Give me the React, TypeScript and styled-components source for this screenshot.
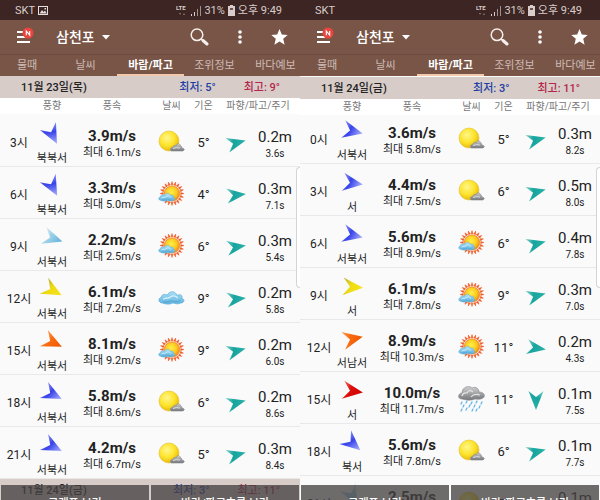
import React from 'react';
import styled, { createGlobalStyle } from 'styled-components';

const GlobalStyle = createGlobalStyle`
  * { box-sizing: border-box; }
  html, body, #root { height: 100%; }
  body {
    margin: 0;
    overflow: hidden;
    background: #fafafa;
    color: #222;
    font-family: Roboto, "Noto Sans CJK KR", sans-serif;
    font-size: 12px;
  }
  button { font: inherit; border: 0; padding: 0; background: none; color: inherit; cursor: pointer; }
`;

type Sky = 'cloudy' | 'sunny' | 'cloud' | 'rain';
type Tone = 'blue' | 'pale' | 'yellow' | 'orange' | 'red' | 'teal';

interface Hour {
  time: string;
  tone: Tone;
  turn: number;
  from: string;
  speed: string;
  gust: string;
  sky: Sky;
  temp: number;
  waveTurn: number;
  wave: string;
  period: string;
}

interface Day {
  date: string;
  low: number;
  high: number;
}

const hour = (
  time: string, tone: Tone, turn: number, from: string, speed: string, gust: string,
  sky: Sky, temp: number, waveTurn: number, wave: string, period: string,
): Hour => ({ time, tone, turn, from, speed, gust, sky, temp, waveTurn, wave, period });

const thursday: Hour[] = [
  hour('3시', 'blue', 63, '북북서', '3.9', '6.1', 'cloudy', 5, -15, '0.2', '3.6'),
  hour('6시', 'blue', 62, '북북서', '3.3', '5.0', 'sunny', 4, -6, '0.3', '7.1'),
  hour('9시', 'pale', 18, '서북서', '2.2', '2.5', 'sunny', 6, -8, '0.3', '5.4'),
  hour('12시', 'yellow', 28, '서북서', '6.1', '7.2', 'cloud', 9, -6, '0.2', '5.8'),
  hour('15시', 'orange', 26, '서북서', '8.1', '9.2', 'sunny', 9, -15, '0.2', '6.0'),
  hour('18시', 'blue', 27, '서북서', '5.8', '8.6', 'cloudy', 6, -14, '0.2', '8.6'),
  hour('21시', 'blue', 27, '서북서', '4.2', '6.7', 'cloudy', 5, -14, '0.3', '8.4'),
];

const friday: Hour[] = [
  hour('0시', 'blue', 13, '서북서', '3.6', '5.8', 'cloudy', 5, -14, '0.3', '8.2'),
  hour('3시', 'blue', 8, '서', '4.4', '7.5', 'cloudy', 6, -14, '0.5', '8.0'),
  hour('6시', 'blue', 13, '서북서', '5.6', '8.9', 'sunny', 6, -14, '0.4', '7.8'),
  hour('9시', 'yellow', 4, '서', '6.1', '7.8', 'sunny', 9, -15, '0.3', '7.0'),
  hour('12시', 'orange', -12, '서남서', '8.9', '10.3', 'sunny', 11, 9, '0.2', '4.3'),
  hour('15시', 'red', 8, '서', '10.0', '11.7', 'rain', 11, 90, '0.1', '7.5'),
  hour('18시', 'blue', 41, '북서', '5.6', '7.8', 'cloudy', 6, -14, '0.1', '7.7'),
  hour('21시', 'pale', 62, '북북서', '2.5', '3.4', 'cloudy', 5, -14, '0.1', '7.6'),
];

const tones: Record<Tone, [string, string, string]> = {
  blue: ['#8f96f4', '#3843ea', '#a3aafc'],
  pale: ['#e6eef2', '#9bd0e8', '#62b4dc'],
  yellow: ['#b8ac3a', '#eedb12', '#f6e21c'],
  orange: ['#f8a35c', '#fa6a10', '#ee5a06'],
  red: ['#f07060', '#dd0d0a', '#ce0505'],
  teal: ['#7fd0cb', '#17a49e', '#2ab0a8'],
};

const Screens = styled.main`
  display: grid;
  grid-template-columns: 1fr 1fr;
  height: 100vh;
  overflow: hidden;
`;

const Phone = styled.section`
  position: relative;
  display: flex;
  flex-direction: column;
  min-width: 0;
  height: 100vh;
  overflow: hidden;
  background: #fafafa;
`;

const StatusBar = styled.div`
  display: flex;
  align-items: center;
  justify-content: space-between;
  flex: none;
  height: 20px;
  padding: 1px 18px 0 15px;
  background: #3c2523;
  color: #d8cdca;
  font-size: 11px;
  line-height: 18px;
`;

const StatusGroup = styled.div`
  display: flex;
  align-items: center;
  gap: 3px;
  white-space: nowrap;
`;

const AppBar = styled.header`
  display: flex;
  align-items: center;
  flex: none;
  height: 35px;
  padding: 0 12px 0 17px;
  background: #795548;
  border-bottom: 1px solid #6d4a3f;
  color: #fff;
`;

const IconButton = styled.button`
  display: flex;
  flex: none;
  align-items: center;
  justify-content: center;
  height: 24px;
`;

const PlaceButton = styled.button`
  display: flex;
  align-items: center;
  gap: 7px;
  margin-left: 21px;
  font-size: 14px;
  line-height: 20px;
  font-weight: 500;
`;

const Actions = styled.div`
  display: flex;
  align-items: center;
  gap: 28px;
  margin-left: auto;
`;

const Tabs = styled.nav`
  display: grid;
  grid-template-columns: 54fr 63fr 67fr 61fr 61fr;
  flex: none;
  height: 21px;
  margin-right: -6px;
  background: #795548;
  overflow: hidden;
`;

const Tab = styled.a<{ $active?: boolean }>`
  display: flex;
  align-items: center;
  justify-content: center;
  padding-top: 3px;
  border-bottom: 2px solid ${p => (p.$active ? '#f3c9ac' : 'transparent')};
  color: ${p => (p.$active ? '#fff' : '#cdbcb4')};
  font-size: 11px;
  line-height: 16px;
  font-weight: ${p => (p.$active ? 700 : 400)};
  text-decoration: none;
  white-space: nowrap;
`;

const DateBar = styled.div<{ $top?: number }>`
  display: flex;
  align-items: center;
  flex: none;
  height: 22px;
  margin-top: ${p => p.$top ?? 0}px;
  padding: 2px 20px 0 21px;
  background: #d7ccc8;
  font-size: 11px;
  line-height: 20px;
  font-weight: 500;
`;

const Extreme = styled.span<{ $kind: 'low' | 'high' }>`
  margin-left: ${p => (p.$kind === 'low' ? 'auto' : '28px')};
  color: ${p => (p.$kind === 'low' ? '#1d3fa5' : '#b3264a')};
`;

const Table = styled.table`
  display: flex;
  flex: none;
  flex-direction: column;
`;

const Head = styled.thead`
  position: relative;
  display: block;
  flex: none;
  background: #fff;
`;

const HeadRow = styled.tr`
  display: grid;
  grid-template-columns: 38px 28px 92px 27px 37px 1fr;
  height: 16px;
`;

const HeadCell = styled.th`
  display: flex;
  align-items: center;
  justify-content: center;
  padding: 0;
  color: #777;
  font-size: 10px;
  line-height: 14px;
  font-weight: 400;
  white-space: nowrap;

  &:last-child { padding-right: 6px; }
`;

const Body = styled.tbody<{ $scrolled?: boolean }>`
  display: flex;
  flex-direction: column;
  margin-top: ${p => (p.$scrolled ? '-3px' : '1px')};
`;

const Row = styled.tr`
  display: grid;
  grid-template-columns: 38px 28px 92px 27px 37px 28px 50px;
  flex: none;
  height: 52px;
  border-bottom: 1px solid #e9e9e9;
`;

const Cell = styled.td<{ $size?: number; $drop?: number }>`
  display: flex;
  flex-direction: column;
  align-items: center;
  justify-content: center;
  padding: ${p => p.$drop ?? 3}px 0 0;
  font-size: ${p => p.$size ?? 12}px;
  line-height: 16px;
  white-space: nowrap;
`;

const WindCell = styled(Cell)`
  justify-content: flex-start;
  gap: 5px;
  padding: 7px 0 0;
`;

const Large = styled.span<{ $strong?: boolean }>`
  font-size: 15px;
  line-height: 18px;
  font-weight: ${p => (p.$strong ? 700 : 400)};
`;

const Small = styled.span`
  font-size: 11px;
  line-height: 16px;
`;

const Tiny = styled.span`
  font-size: 10px;
  line-height: 16px;
`;

const EdgeHandle = styled.div`
  position: absolute;
  top: 167px;
  right: 0;
  width: 4px;
  height: 121px;
  border: 1px solid #d4d4d4;
  border-right: 0;
  border-radius: 4px 0 0 4px;
  background: #fff;
`;

const BottomBar = styled.div`
  position: absolute;
  left: 0;
  right: 0;
  bottom: 0;
  display: grid;
  grid-template-columns: 1fr 1fr;
  gap: 2px;
  height: 15px;
  padding: 0 1px;
  overflow: hidden;
`;

const BottomButton = styled.button`
  display: flex;
  align-items: flex-start;
  justify-content: center;
  padding-top: 11px;
  background: rgba(70, 66, 66, 0.78);
  color: #fff;
  font-size: 11px;
  line-height: 16px;
  font-weight: 500;
  white-space: nowrap;
`;

const Drawing = styled.svg`
  display: block;
  flex: none;
  overflow: visible;
`;

function Arrow({ tone, turn, wave }: { tone: Tone; turn: number; wave?: boolean }) {
  const id = `arrow-${tone}`;
  const [tail, mid, tip] = tones[tone];
  const shape = wave ? 'M-9-7.5 10 0-9 7.5-3 0Z' : 'M-9-9 11 0-9 9-2 0Z';
  return (
    <Drawing width="24" height="24" viewBox="-12 -12 24 24" aria-hidden="true">
      <defs>
        <linearGradient id={id} x1="0" x2="1" y1="0" y2="0.3">
          <stop offset="0" stopColor={tail} />
          <stop offset="0.45" stopColor={mid} />
          <stop offset="1" stopColor={tip} />
        </linearGradient>
      </defs>
      <g transform={`rotate(${turn})`}>
        <path d={shape} fill={`url(#${id})`} />
      </g>
    </Drawing>
  );
}

function PuffCloud({ x, y, scale }: { x: number; y: number; scale: number }) {
  return (
    <g transform={`translate(${x} ${y}) scale(${scale})`}>
      <path
        d="M4 12C0 12-1 7 3 6 3 3 7 2 9 4 11-1 18-1 19 4 23 2 26 5 24 7 28 8 27 12 23 12 20 14 17 12 15 12 11 14 7 13 4 12Z"
        fill="url(#puff)" stroke="#5cabd4" strokeWidth="0.7"
      />
      <path d="M5 8C8 6 10 8 12 6S18 4 20 7" fill="none" stroke="#d9f2fc" strokeWidth="1.3" />
      <path d="M5 11C9 12 11 9 15 10S20 11 23 9" fill="none" stroke="#4a9ecb" strokeWidth="0.8" />
    </g>
  );
}

const rays = Array.from({ length: 20 }, (_, i) => i * 18);

function SkyIcon({ sky }: { sky: Sky }) {
  return (
    <Drawing width="27" height="27" viewBox="0 0 27 27" role="img" aria-label={sky}>
      <defs>
        <radialGradient id="sun" cx="0.4" cy="0.35" r="0.65">
          <stop offset="0" stopColor="#fff68a" />
          <stop offset="0.6" stopColor="#fde32a" />
          <stop offset="1" stopColor="#e9b90c" />
        </radialGradient>
        <radialGradient id="hotsun" cx="0.45" cy="0.4" r="0.6">
          <stop offset="0" stopColor="#fff04a" />
          <stop offset="0.6" stopColor="#fdc91d" />
          <stop offset="1" stopColor="#f18a14" />
        </radialGradient>
        <linearGradient id="puff" x1="0" x2="0" y1="0" y2="1">
          <stop offset="0" stopColor="#aadff5" />
          <stop offset="1" stopColor="#5fb2df" />
        </linearGradient>
        <linearGradient id="gray" x1="0" x2="0" y1="0" y2="1">
          <stop offset="0" stopColor="#d0d0d0" />
          <stop offset="1" stopColor="#74777b" />
        </linearGradient>
      </defs>
      {sky === 'cloudy' && (
        <>
          <circle cx="11" cy="12" r="10" fill="url(#sun)" stroke="#e3bf2e" strokeWidth="0.6" />
          <path d="M13 22Q11 19 15 18 16 15 18 17 20 12 23 17 24 18 24 19 28 20 25 22Z" fill="url(#gray)" stroke="#85888c" strokeWidth="0.6" />
          <path d="M15 19.500Q18 18 22 19" stroke="#eee" strokeWidth="0.8" fill="none" />
        </>
      )}
      {sky === 'sunny' && (
        <>
          {rays.map(a => (
            <path key={a} d="M13 3.800 14 .5 15 3.800Z" transform={`rotate(${a} 14 12.500)`} fill="#ee5a24" stroke="#ee5a24" strokeWidth="0.5" />
          ))}
          <circle cx="14" cy="12.500" r="7.600" fill="url(#hotsun)" stroke="#f07f1e" strokeWidth="0.8" />
          <PuffCloud x={0.5} y={12} scale={0.62} />
        </>
      )}
      {sky === 'cloud' && <PuffCloud x={0.5} y={6.500} scale={0.96} />}
      {sky === 'rain' && (
        <>
          <path d="M4 13C-1 13 0 7 4 7 4 1 11-1 14 2 18 0 21 3 21 6 26 6 28 10 25 12 22 14 19 13 17 13 12 15 8 14 4 13Z" fill="url(#gray)" stroke="#85858a" strokeWidth="0.6" />
          <path d="M4 10Q5 6 9 7 11 3 15 6M13 11Q16 7 22 9" stroke="#e4e4e4" strokeWidth="1.200" fill="none" />
          <path d="M4 16 3 18M9 15 8 17M14 16 13 18M19 15 18 17M24 16 23 18M6 19 5 21M12 19 11 21M17 19 16 21M22 20 21 22M4 23 3 25M9 22 8 24M15 23 14 25M19 23 18 25" stroke="#63b7e8" strokeWidth="1.300" strokeLinecap="round" />
        </>
      )}
    </Drawing>
  );
}

function StatusIcons() {
  return (
    <StatusGroup>
      <svg width="12" height="12" viewBox="0 0 12 12" aria-label="LTE">
        <text x="0" y="5" fontSize="6" fontWeight="700" fill="#d8cdca">LTE</text>
        <path d="M3 8h2l-1 2zM7 10h2l-1-2z" fill="#8d7b78" />
      </svg>
      <svg width="10" height="10" viewBox="0 0 10 10" aria-hidden="true">
        <path d="M0 8h1v2H0zM3 6h1v4H3z" fill="#d8cdca" />
        <path d="M6 3h1v7H6zM9 0h1v10H9z" fill="#a08f8c" />
      </svg>
      <span>31%</span>
      <svg width="7" height="11" viewBox="0 0 7 11" aria-hidden="true">
        <path d="M2 0h3v1h2v10H0V1h2z" fill="#d8cdca" />
        <path d="M2 3h3v2H2z" fill="#6d5653" />
      </svg>
      <span>오후 9:49</span>
    </StatusGroup>
  );
}

function Screen({ day, hours, shot, scrolled }: { day: Day; hours: Hour[]; shot?: boolean; scrolled?: boolean }) {
  return (
    <Phone>
      <StatusBar>
        <StatusGroup>
          <span>SKT</span>
          {shot && (
            <svg width="10" height="9" viewBox="0 0 10 9" aria-hidden="true">
              <path d="M0 0h10v9H0zM1 1v7h8V1z" fill="#e6dedc" fillRule="evenodd" />
              <path d="M1.500 7.500 4 4l1.500 2L7 4.500l1.800 3zM6.500 2h1.500v1.500H6.500z" fill="#e6dedc" />
            </svg>
          )}
        </StatusGroup>
        <StatusIcons />
      </StatusBar>
      <AppBar>
        <IconButton aria-label="메뉴">
          <svg width="18" height="20" viewBox="0 0 18 20">
            <path d="M0 4h13v2H0zM0 9h13v2H0zM0 14h13v2H0z" fill="#fff" />
            <circle cx="11" cy="6" r="5.500" fill="#e8453f" />
            <path d="M9.300 8.200V4l3.400 4.200V4" fill="none" stroke="#fff" strokeWidth="1.100" />
          </svg>
        </IconButton>
        <PlaceButton>
          삼천포
          <svg width="8" height="5" viewBox="0 0 8 5" aria-hidden="true"><path d="M0 0h8L4 4.500z" fill="#fff" /></svg>
        </PlaceButton>
        <Actions>
          <IconButton aria-label="검색">
            <svg width="19" height="18" viewBox="0 0 19 18" fill="none" stroke="#f6efec">
              <circle cx="7" cy="6.800" r="5.800" strokeWidth="1.500" />
              <path d="m11 11 2 1.500" strokeWidth="1.500" />
              <path d="m13 12.500 4 3.500" strokeWidth="3" strokeLinecap="round" />
            </svg>
          </IconButton>
          <IconButton aria-label="더보기">
            <svg width="6" height="14" viewBox="0 0 6 14" fill="#fff"><circle cx="3" cy="2" r="1.800" /><circle cx="3" cy="7" r="1.800" /><circle cx="3" cy="12" r="1.800" /></svg>
          </IconButton>
          <IconButton aria-label="즐겨찾기">
            <svg width="17" height="16" viewBox="0 0 17 16"><path d="m8.500 0 2.300 5.500 5.900.4-4.500 3.900 1.400 5.900-5.100-3.200-5.100 3.200 1.400-5.900L.3 5.900l5.900-.4z" fill="#fff" /></svg>
          </IconButton>
        </Actions>
      </AppBar>
      <Tabs>
        <Tab href="#tide">물때</Tab>
        <Tab href="#weather">날씨</Tab>
        <Tab href="#wind" $active>바람/파고</Tab>
        <Tab href="#level">조위정보</Tab>
        <Tab href="#sea">바다예보</Tab>
      </Tabs>
      <DateBar $top={scrolled ? 1 : 0}>
        <span>{day.date}</span>
        <Extreme $kind="low">최저: {day.low}°</Extreme>
        <Extreme $kind="high">최고: {day.high}°</Extreme>
      </DateBar>
      <Table>
        <Head>
          <HeadRow>
            <HeadCell aria-label="시간" />
            <HeadCell>풍향</HeadCell>
            <HeadCell>풍속</HeadCell>
            <HeadCell>날씨</HeadCell>
            <HeadCell>기온</HeadCell>
            <HeadCell>파향/파고/주기</HeadCell>
          </HeadRow>
        </Head>
        <Body $scrolled={scrolled}>
          {hours.map(h => (
            <Row key={h.time}>
              <Cell>{h.time}</Cell>
              <WindCell>
                <Arrow tone={h.tone} turn={h.turn} />
                <Small>{h.from}</Small>
              </WindCell>
              <Cell $drop={6}>
                <Large $strong>{h.speed}m/s</Large>
                <Small>최대 {h.gust}m/s</Small>
              </Cell>
              <Cell><SkyIcon sky={h.sky} /></Cell>
              <Cell $size={13}>{h.temp}°</Cell>
              <Cell><Arrow tone="teal" turn={h.waveTurn} wave /></Cell>
              <Cell $drop={7}>
                <Large>{h.wave}m</Large>
                <Tiny>{h.period}s</Tiny>
              </Cell>
            </Row>
          ))}
        </Body>
      </Table>
      {!scrolled && (
        <DateBar>
          <span>11월 24일(금)</span>
          <Extreme $kind="low">최저: 3°</Extreme>
          <Extreme $kind="high">최고: 11°</Extreme>
        </DateBar>
      )}
      <EdgeHandle />
      <BottomBar>
        <BottomButton>그래프 보기</BottomButton>
        <BottomButton>바람/파고흐름 보기</BottomButton>
      </BottomBar>
    </Phone>
  );
}

export default function App() {
  return (
    <>
      <GlobalStyle />
      <Screens>
        <Screen day={{ date: '11월 23일(목)', low: 5, high: 9 }} hours={thursday} shot />
        <Screen day={{ date: '11월 24일(금)', low: 3, high: 11 }} hours={friday} scrolled />
      </Screens>
    </>
  );
}
